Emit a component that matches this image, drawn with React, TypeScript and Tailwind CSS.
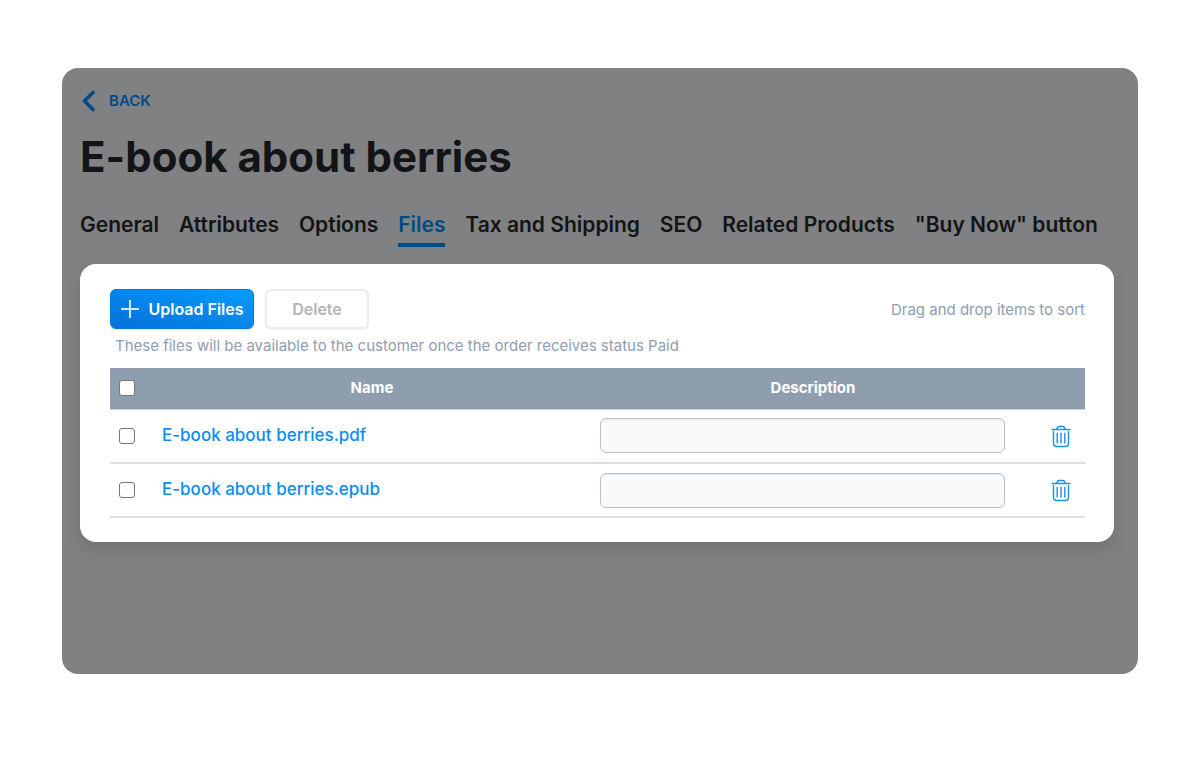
import { useState } from "react";

const tabs = [
  "General",
  "Attributes",
  "Options",
  "Files",
  "Tax and Shipping",
  "SEO",
  "Related Products",
  "\"Buy Now\" button",
];

const files = ["E-book about berries.pdf", "E-book about berries.epub"];

const checkbox =
  "block size-4 appearance-none rounded-[3px] border border-[#767676] bg-white checked:bg-[#0b8ef0]";

function TrashIcon() {
  return (
    <svg width="20" height="24" viewBox="0 0 20 24" fill="none" stroke="#1c90ee" strokeWidth="1.4">
      <path d="M1 5.5h18" strokeLinecap="round" />
      <path d="M5.8 5.3C6.2 3.300 7 2.500 8.300 2.500h3.400c1.300 0 2.100.8 2.500 2.800" />
      <path d="M2.500 7.500v12c0 2.100.9 3 3 3h9c2.100 0 3-.9 3-3v-12" strokeLinecap="round" />
      <path d="M6.200 8.800v10.700M10 8.800v10.700M13.800 8.800v10.700" />
    </svg>
  );
}

export default function App() {
  const [active, setActive] = useState("Files");

  return (
    <main className="px-[62px] pt-[68px] pb-24 font-['Inter',sans-serif]">
      <div className="rounded-[16px] bg-[#808183] pt-[21px] pr-6 pb-[132px] pl-[18px]">
        <a href="#" className="inline-flex items-center gap-3 pl-px text-[15px] leading-6 font-semibold text-[#004b86]">
          <svg width="16" height="22" viewBox="0 0 16 22" fill="none" stroke="currentColor" strokeWidth="3.600">
            <path d="M12 2.500L3.500 11l8.500 8.500" strokeLinecap="round" strokeLinejoin="round" />
          </svg>
          BACK
        </a>

        <h1 className="mt-[15px] text-[42px] leading-12 font-bold text-[#121416]">E-book about berries</h1>

        <nav className="mt-[30px] mr-4 flex justify-between text-[21px] leading-7 font-semibold text-[#121416]">
          {tabs.map((tab) => (
            <button
              key={tab}
              type="button"
              onClick={() => setActive(tab)}
              className={
                tab === active
                  ? "border-b-4 border-[#004b86] pb-1 whitespace-nowrap text-[#004b86]"
                  : "border-b-4 border-transparent pb-1 whitespace-nowrap"
              }
            >
              {tab}
            </button>
          ))}
        </nav>

        <section className="mt-[17px] rounded-[16px] bg-white pt-[25px] pr-[29px] pb-6 pl-[30px] shadow-[0_8px_16px_rgba(0,0,0,0.1)]">
          <div className="flex items-center justify-between">
            <div className="flex items-center gap-[11px]">
              <button
                type="button"
                className="flex h-10 w-36 items-center justify-center gap-2 rounded-md border border-[#0878dc] bg-linear-to-tr from-[#0670dc] to-[#089cfb] text-[16px] font-semibold text-white shadow-sm"
              >
                <svg width="20" height="20" viewBox="0 0 20 20" stroke="#d3e8fc" strokeWidth="2">
                  <path d="M10 1v18M1 10h18" />
                </svg>
                Upload Files
              </button>
              <button
                type="button"
                className="h-10 w-[104px] rounded-md border-2 border-[#ececf0] bg-white text-[16px] font-semibold text-[#b4b4b4] shadow-xs"
              >
                Delete
              </button>
            </div>
            <p className="pt-0.5 text-[15px] text-[#8e9eb0]">Drag and drop items to sort</p>
          </div>

          <p className="mt-[5px] mb-2.5 pl-[5px] text-[15px] leading-6 text-[#8e9eb0]">
            These files will be available to the customer once the order receives status Paid
          </p>

          <table className="w-full table-fixed border-collapse">
            <thead>
              <tr className="h-[41px] border-b border-[#c9d1da] bg-[#8f9eae] text-[15px] text-white">
                <th className="w-[34px] pl-[9px]">
                  <input type="checkbox" aria-label="Select all files" className={checkbox} />
                </th>
                <th className="font-bold">Name</th>
                <th className="w-[426px] font-bold">Description</th>
                <th className="w-[59px]" />
              </tr>
            </thead>
            <tbody>
              {files.map((file) => (
                <tr key={file} className="h-[54px] border-b-2 border-[#d9dfe5]">
                  <td className="pl-[9px]">
                    <input type="checkbox" aria-label={file} className={checkbox} />
                  </td>
                  <td className="pl-[18px]">
                    <a href="#" className="text-[17px] font-medium text-[#0b8ef0]">{file}</a>
                  </td>
                  <td className="pr-[21px]">
                    <input
                      type="text"
                      aria-label="Description"
                      className="block h-[35px] w-full rounded-md border border-[#b7c2cf] bg-[#f9fafc] px-3 text-[15px] shadow-[inset_0_1px_1px_rgba(0,0,0,0.08)]"
                    />
                  </td>
                  <td className="pl-[25px]">
                    <button type="button" aria-label="Delete file" className="block">
                      <TrashIcon />
                    </button>
                  </td>
                </tr>
              ))}
            </tbody>
          </table>
        </section>
      </div>
    </main>
  );
}
